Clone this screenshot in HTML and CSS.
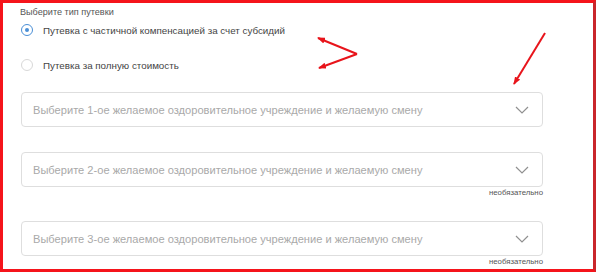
FILE: index.html
```html
<!DOCTYPE html>
<html lang="ru">
<head>
<meta charset="utf-8">
<link rel="stylesheet" href="styles.css">
</head>
<body>
<div class="frame">
  <div class="group-label">Выберите тип путевки</div>
  <label class="radio-row">
    <span class="radio checked"></span>
    <span class="radio-text">Путевка с частичной компенсацией за счет субсидий</span>
  </label>
  <label class="radio-row second">
    <span class="radio"></span>
    <span class="radio-text">Путевка за полную стоимость</span>
  </label>

  <div class="field first">
    <div class="select">
      <span class="placeholder">Выберите 1-ое желаемое оздоровительное учреждение и желаемую смену</span>
      <svg class="chev" width="14" height="8" viewBox="0 0 14 8"><path d="M1 1 L7 7 L13 1" fill="none" stroke="#909090" stroke-width="1.2"/></svg>
    </div>
  </div>
  <div class="field">
    <div class="select">
      <span class="placeholder">Выберите 2-ое желаемое оздоровительное учреждение и желаемую смену</span>
      <svg class="chev" width="14" height="8" viewBox="0 0 14 8"><path d="M1 1 L7 7 L13 1" fill="none" stroke="#909090" stroke-width="1.2"/></svg>
    </div>
    <div class="hint">необязательно</div>
  </div>
  <div class="field">
    <div class="select">
      <span class="placeholder">Выберите 3-ое желаемое оздоровительное учреждение и желаемую смену</span>
      <svg class="chev" width="14" height="8" viewBox="0 0 14 8"><path d="M1 1 L7 7 L13 1" fill="none" stroke="#909090" stroke-width="1.2"/></svg>
    </div>
    <div class="hint">необязательно</div>
  </div>

  <svg class="arrows" width="596" height="272" viewBox="0 0 596 272">
    <defs>
      <marker id="ah" markerWidth="8" markerHeight="6" refX="7" refY="3" orient="auto" markerUnits="userSpaceOnUse">
        <path d="M0 0 L8 3 L0 6 Z" fill="#e8141b"/>
      </marker>
    </defs>
    <line x1="357" y1="54" x2="318" y2="38" stroke="#e8141b" stroke-width="2" marker-end="url(#ah)"/>
    <line x1="357" y1="54" x2="319" y2="68" stroke="#e8141b" stroke-width="2" marker-end="url(#ah)"/>
    <line x1="545" y1="33" x2="514" y2="84" stroke="#e8141b" stroke-width="2" marker-end="url(#ah)"/>
  </svg>
</div>
</body>
</html>
```
FILE: styles.css
```css
html, body {
  margin: 0;
  padding: 0;
  background: #fff;
}
body {
  font-family: "Liberation Sans", Arial, sans-serif;
  width: 600px;
  height: 278px;
  overflow: hidden;
}
.frame {
  position: relative;
  box-sizing: border-box;
  width: 596px;
  height: 272px;
  border: 3px solid #f5141b;
  border-right-color: #c9262b;
  padding: 3px 0 0 18px;
}
.group-label {
  font-size: 9.1px;
  line-height: 13px;
  color: #555;
  margin-left: -1px;
  margin-bottom: 1px;
}
.radio-row {
  display: flex;
  align-items: center;
  height: 20px;
  gap: 10px;
}
.radio-row.second {
  margin-top: 15px;
}
.radio {
  box-sizing: border-box;
  width: 12px;
  height: 12px;
  border-radius: 50%;
  border: 1px solid #d8d8d8;
  display: flex;
  align-items: center;
  justify-content: center;
  flex: none;
}
.radio.checked {
  border: 1.5px solid #4a8fd6;
}
.radio.checked::after {
  content: "";
  width: 4px;
  height: 4px;
  border-radius: 50%;
  background: #4a8fd6;
}
.radio-text {
  font-size: 9.8px;
  color: #444;
}
.field {
  width: 522px;
}
.field.first {
  margin-top: 17px;
  margin-bottom: 25px;
}
.select {
  box-sizing: border-box;
  height: 35px;
  border: 1px solid #dedede;
  border-radius: 4px;
  display: flex;
  align-items: center;
  justify-content: space-between;
  padding: 0 13px 0 11px;
}
.placeholder {
  font-size: 11.1px;
  color: #a9a9a9;
}
.chev {
  display: block;
  flex: none;
}
.hint {
  height: 12px;
  line-height: 12px;
  font-size: 7.8px;
  color: #555;
  text-align: right;
  margin-bottom: 22px;
}
.arrows {
  position: absolute;
  left: -3px;
  top: -3px;
  pointer-events: none;
}
```
